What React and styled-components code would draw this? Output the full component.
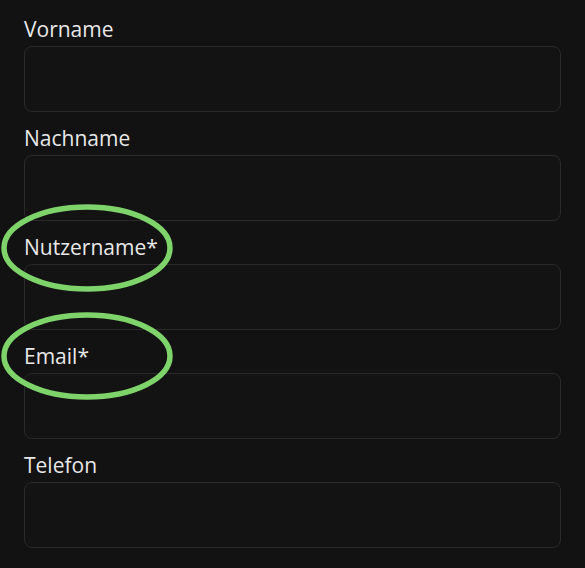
import styled, { createGlobalStyle } from "styled-components";

const GlobalStyle = createGlobalStyle`
	html, body {
		margin: 0;
		padding: 0;
		background: #121212;
	}
`;

const Form = styled.form`
	position: relative;
	width: 585px;
	height: 568px;
	box-sizing: border-box;
	padding: 15px 24px 0;
	display: flex;
	flex-direction: column;
	gap: 12px;
	background: #121212;
	font-family: "Open Sans", "Lato", sans-serif;
	overflow: hidden;
`;

const Field = styled.div`
	display: flex;
	flex-direction: column;
	gap: 2px;
`;

const Label = styled.label`
	color: #e8e8e8;
	font-size: 21px;
	line-height: 29px;
`;

const Input = styled.input`
	height: 66px;
	box-sizing: border-box;
	width: 537px;
	background: #131313;
	border: 1.5px solid #2a2a2a;
	border-radius: 8px;
	outline: none;
	color: #e8e8e8;
	font: inherit;
	padding: 0 14px;
`;

const Circle = styled.svg`
	position: absolute;
	left: 0;
	top: ${(p) => p.$top}px;
	width: 176px;
	height: 92px;
	pointer-events: none;
`;

const fields = ["Vorname", "Nachname", "Nutzername*", "Email*", "Telefon"];

const Highlight = ({ top }) => (
	<Circle $top={top} viewBox="0 0 176 92">
		<ellipse cx="87" cy="46" rx="83" ry="41" fill="none" stroke="#7fd36b" strokeWidth="5.5" />
	</Circle>
);

const App = () => (
	<>
		<GlobalStyle />
		<Form>
			{fields.map((name) => (
				<Field key={name}>
					<Label>{name}</Label>
					<Input type="text" />
				</Field>
			))}
			<Highlight top={202} />
			<Highlight top={310} />
		</Form>
	</>
);

export default App;
